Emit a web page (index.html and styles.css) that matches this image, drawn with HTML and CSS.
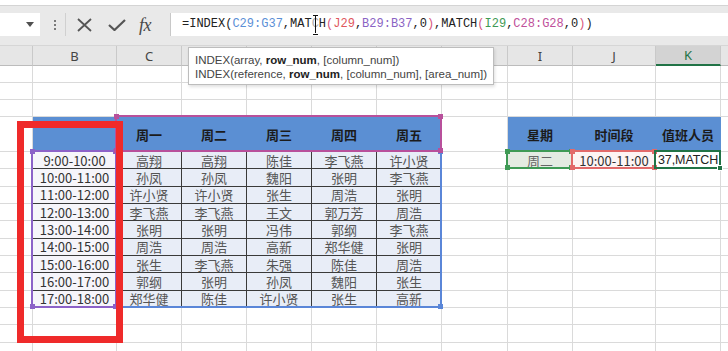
FILE: index.html
```html
<!DOCTYPE html>
<html lang="zh-CN">
<head>
<meta charset="utf-8">
<title>值班表</title>
<link rel="stylesheet" href="styles.css">
</head>
<body>
<div class="top"></div>
<div class="fbar">
  <div class="namebox"><svg width="8" height="5" viewBox="0 0 8 5"><path d="M0 0H8L4 5Z" fill="#505050"/></svg></div>
  <div class="grip"><span></span><span></span><span></span></div>
  <div class="btns">
    <svg class="ic-x" width="17" height="14" viewBox="0 0 17 14"><path d="M2 1L15 13M15 1L2 13" stroke="#555" stroke-width="1.8" fill="none"/></svg>
    <svg class="ic-ok" width="18" height="12" viewBox="0 0 18 12"><path d="M1 6L6.5 11L17 1" stroke="#555" stroke-width="2.2" fill="none"/></svg>
    <span class="fx">fx</span>
  </div>
  <div class="formula"><span>=INDEX(</span><span class="r1">C29:G37</span>,MAT<span class="cur">C</span>H<span class="pp">(</span><span class="r2">J29</span>,<span class="r3">B29:B37</span>,0<span class="pp">)</span>,MATCH<span class="pp">(</span><span class="r4">I29</span>,<span class="r5">C28:G28</span>,0<span class="pp">)</span>)</div>
</div>
<div class="sheet">
  <div class="grid">
    <div class="h"></div><div class="h">B</div><div class="h">C</div><div class="h"></div><div class="h"></div><div class="h"></div><div class="h"></div><div class="h"></div><div class="h">I</div><div class="h">J</div><div class="h hs">K</div><div class="h"></div>

    <div></div><div></div><div></div><div></div><div></div><div></div><div></div><div></div><div></div><div></div><div></div><div></div>
    <div></div><div></div><div></div><div></div><div></div><div></div><div></div><div></div><div></div><div></div><div></div><div></div>
    <div></div><div></div><div></div><div></div><div></div><div></div><div></div><div></div><div></div><div></div><div></div><div></div>

    <div></div><div class="b"></div><div class="b">周一</div><div class="b">周二</div><div class="b">周三</div><div class="b">周四</div><div class="b">周五</div><div></div><div class="b">星期</div><div class="b">时间段</div><div class="b">值班人员</div><div></div>

    <div></div><div class="t">9:00-10:00</div><div class="d">高翔</div><div class="d">高翔</div><div class="d">陈佳</div><div class="d">李飞燕</div><div class="d">许小贤</div><div></div><div class="i2">周二</div><div class="j2">10:00-11:00</div><div class="k2">37,MATCH</div><div></div>
    <div></div><div class="t">10:00-11:00</div><div class="d">孙凤</div><div class="d">孙凤</div><div class="d">魏阳</div><div class="d">张明</div><div class="d">李飞燕</div><div></div><div></div><div></div><div></div><div></div>
    <div></div><div class="t">11:00-12:00</div><div class="d">许小贤</div><div class="d">许小贤</div><div class="d">张生</div><div class="d">周浩</div><div class="d">张明</div><div></div><div></div><div></div><div></div><div></div>
    <div></div><div class="t">12:00-13:00</div><div class="d">李飞燕</div><div class="d">李飞燕</div><div class="d">王文</div><div class="d">郭万芳</div><div class="d">周浩</div><div></div><div></div><div></div><div></div><div></div>
    <div></div><div class="t">13:00-14:00</div><div class="d">张明</div><div class="d">张明</div><div class="d">冯伟</div><div class="d">郭纲</div><div class="d">李飞燕</div><div></div><div></div><div></div><div></div><div></div>
    <div></div><div class="t">14:00-15:00</div><div class="d">周浩</div><div class="d">周浩</div><div class="d">高新</div><div class="d">郑华健</div><div class="d">张明</div><div></div><div></div><div></div><div></div><div></div>
    <div></div><div class="t">15:00-16:00</div><div class="d">张生</div><div class="d">李飞燕</div><div class="d">朱强</div><div class="d">陈佳</div><div class="d">周浩</div><div></div><div></div><div></div><div></div><div></div>
    <div></div><div class="t">16:00-17:00</div><div class="d">郭纲</div><div class="d">张明</div><div class="d">孙凤</div><div class="d">魏阳</div><div class="d">张生</div><div></div><div></div><div></div><div></div><div></div>
    <div></div><div class="t">17:00-18:00</div><div class="d">郑华健</div><div class="d">陈佳</div><div class="d">许小贤</div><div class="d">张生</div><div class="d">高新</div><div></div><div></div><div></div><div></div><div></div>

    <div></div><div></div><div></div><div></div><div></div><div></div><div></div><div></div><div></div><div></div><div></div><div></div>
    <div></div><div></div><div></div><div></div><div></div><div></div><div></div><div></div><div></div><div></div><div></div><div></div>
    <div></div><div></div><div></div><div></div><div></div><div></div><div></div><div></div><div></div><div></div><div></div><div></div>
  </div>

  <div class="rng blue r-main"><span class="tl"></span><span class="tr"></span><span class="bl"></span><span class="br"></span></div>
  <div class="rng purple r-time"><span class="tl"></span><span class="tr"></span><span class="bl"></span><span class="br"></span></div>
  <div class="rng pink r-head"><span class="tl"></span><span class="tr"></span><span class="bl"></span><span class="br"></span></div>
  <div class="rng green r-i"><span class="tl"></span><span class="tr"></span><span class="bl"></span><span class="br"></span></div>
  <div class="rng red r-j"><span class="tl"></span><span class="tr"></span><span class="bl"></span><span class="br"></span></div>
  <div class="active r-k"><span class="br"></span></div>

  <div class="tip">
    <p>INDEX(array, <b>row_num</b>, [column_num])</p>
    <p>INDEX(reference, <b>row_num</b>, [column_num], [area_num])</p>
  </div>

  <div class="mark"></div>
</div>
</body>
</html>
```

FILE: styles.css
```css
* { box-sizing: border-box; margin: 0; padding: 0; }
html, body { width: 728px; height: 351px; overflow: hidden; background: #fff; }
body { font-family: "Noto Sans CJK SC", "Noto Sans", sans-serif; color: #333; }

.top { height: 6px; background: #fff; border-bottom: 1px solid #d4d4d4; }

.fbar {
  height: 40px;
  background: #e9e9e9;
  border-bottom: 1px solid #d6d6d6;
  display: flex;
  align-items: flex-start;
  padding-top: 7px;
}
.namebox {
  width: 40px; height: 23px; background: #fff;
  display: flex; align-items: center; justify-content: flex-end;
  padding-right: 6px;
}
.grip {
  width: 25px; height: 23px; padding-left: 14px;
  display: flex; flex-direction: column; justify-content: center; gap: 2px;
}
.grip span { width: 2px; height: 2px; background: #7a7a7a; display: block; }
.btns {
  width: 98px; height: 23px;
  display: flex; align-items: center;
  padding-left: 10px;
  border-left: 1px solid #d0d0d0;
}
.ic-x { margin-right: 15px; }
.ic-ok { margin-right: 13px; }
.fx {
  font-family: "Liberation Serif", serif; font-style: italic;
  font-size: 18px; color: #4a4a4a; line-height: 1; letter-spacing: -0.5px;
}
.formula {
  position: relative;
  margin-left: 7px; flex: 1; height: 23px;
  background: #fff; border-left: 1px solid #c8c8c8;
  padding-left: 11px;
  font-family: "Liberation Mono", monospace; font-size: 12px; line-height: 22px;
  color: #222; white-space: nowrap;
}
.r1 { color: #5b8fd6; }
.r2 { color: #e0575d; }
.r3 { color: #8a63c4; }
.r4 { color: #3f9a55; }
.r5 { color: #c0509a; }
.pp { color: #d8577e; }
.cur { position: relative; color: #aaa; }
.cur::after {
  content: ""; position: absolute; left: 3px; top: -2px; width: 1px; height: 18px; background: #111;
}
.cur::before {
  content: ""; position: absolute; left: 1px; top: -2px; width: 5px; height: 18px;
  border-top: 1px solid #111; border-bottom: 1px solid #111;
}

.sheet { position: relative; height: 305px; overflow: hidden; }
.grid {
  display: grid;
  width: 751px;
  grid-template-columns: 33px 84px 65px 65px 65px 65px 65px 66px 65px 83px 65px 31px;
  grid-template-rows: 20px 17px 17px 17px 35px repeat(12, 17.33px);
}
.grid > div {
  border-right: 1px solid #dadada;
  border-bottom: 1px solid #dadada;
  display: flex; align-items: center; justify-content: center;
  font-size: 13px; white-space: nowrap; overflow: hidden; min-width: 0;
}
.grid > .h {
  background: #e6e6e6; border-right-color: #c9c9c9; border-bottom-color: #bcbcbc;
  color: #444; font-family: "Noto Sans", "Liberation Sans", sans-serif; font-size: 13px;
}
.grid > .hs { background: #d3d3d3; color: #217346; border-bottom: 2px solid #217346; }
.grid > .b {
  background: #5b8fd3; border-color: #5b8fd3;
  font-weight: 700; color: #1b1b1b;
}
.grid > .d { background: #e8edf7; border-color: #3a3a3a; color: #555; }
.grid > .t { background: #f6f5fa; border-bottom-color: #3a3a3a; color: #333; }
.grid > .i2 { background: #e4ebe2; color: #666; }
.grid > .j2 { background: #fdf4f3; color: #333; }
.grid > .k2 {
  justify-content: flex-start; padding-left: 2px;
  font-family: "Liberation Sans", sans-serif; font-size: 12.5px; letter-spacing: -0.1px; color: #222;
}

.rng { position: absolute; border: 2px solid; }
.rng span, .active span { position: absolute; width: 5px; height: 5px; }
.tl { left: -3px; top: -3px; }
.tr { right: -3px; top: -3px; }
.bl { left: -3px; bottom: -3px; }
.br { right: -3px; bottom: -3px; }

.pink { border-color: #b8509b; }
.pink span { background: #b8509b; }
.purple { border-color: #8c62c8; }
.purple span { background: #8c62c8; }
.blue { border-color: #5a86d8; }
.blue span { background: #5a86d8; }
.green { border-color: #3f9a55; }
.green span { background: #3f9a55; }
.red { border-color: #e26a6a; }
.red span { background: #e26a6a; }

.r-head { left: 115px; top: 69px; width: 327px; height: 37px; }
.r-main { left: 115px; top: 104px; width: 327px; height: 158px; }
.r-time { left: 31px; top: 104px; width: 86px; height: 158px; }
.r-i { left: 506px; top: 104px; width: 67px; height: 19px; }
.r-j { left: 571px; top: 104px; width: 85px; height: 19px; }
.active {
  position: absolute; left: 654px; top: 104px; width: 67px; height: 19px;
  border: 2px solid #217346;
}
.active span { background: #217346; border: 1px solid #fff; width: 6px; height: 6px; right: -4px; bottom: -4px; }

.tip {
  position: absolute; left: 188px; top: 1px; width: 306px; height: 38px;
  background: #fff; border: 1px solid #bdbdbd;
  box-shadow: 1px 2px 3px rgba(0, 0, 0, 0.12);
  padding: 5px 0 0 6px;
  font-family: "Liberation Sans", sans-serif; font-size: 11.5px; line-height: 14px;
  color: #444; white-space: nowrap;
}
.tip b { color: #222; font-weight: 700; }

.mark {
  position: absolute; left: 17px; top: 75px; width: 106px; height: 222px;
  border: 7px solid #ef2a2a;
}
```
